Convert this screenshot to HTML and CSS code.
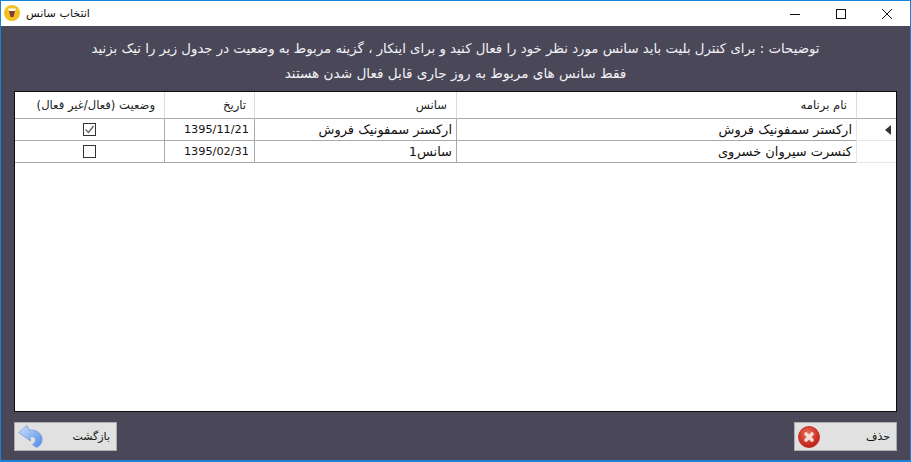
FILE: index.html
```html
<!DOCTYPE html>
<html lang="fa" dir="rtl">
<head>
<meta charset="utf-8">
<title>انتخاب سانس</title>
<link rel="stylesheet" href="styles.css">
</head>
<body>
<div class="window">
  <header class="titlebar">
    <div class="controls">
      <span class="ctl"><svg width="12" height="12" viewBox="0 0 12 12"><path d="M1 11L11 1M1 1l10 10" stroke="#111" stroke-width="1" fill="none"/></svg></span>
      <span class="ctl"><svg width="12" height="12" viewBox="0 0 12 12"><rect x="1.500" y="1.500" width="9" height="9" stroke="#111" fill="none"/></svg></span>
      <span class="ctl"><svg width="12" height="12" viewBox="0 0 12 12"><path d="M1 6.500h10" stroke="#111" fill="none"/></svg></span>
    </div>
    <div class="title-left">
      <span class="title-text">انتخاب سانس</span>
      <svg class="app-icon" width="18" height="18" viewBox="0 0 18 18"><circle cx="9" cy="9" r="8" fill="#f2c11d"/><path d="M5 4.500h8l-1 2.500H6z" fill="#fff"/><path d="M6 7h6l-1.500 6h-3z" fill="#8a3a3a"/></svg>
    </div>
  </header>
  <main class="content">
    <div class="notes">
      <p>توضیحات : برای کنترل بلیت باید سانس مورد نظر خود را فعال کنید و برای اینکار ، گزینه مربوط به وضعیت در جدول زیر را تیک بزنید</p>
      <p class="note-second">فقط سانس های مربوط به روز جاری قابل فعال شدن هستند</p>
    </div>
    <div class="grid">
      <div class="row head">
        <div class="cell rh"></div>
        <div class="cell name">نام برنامه</div>
        <div class="cell session">سانس</div>
        <div class="cell date">تاریخ</div>
        <div class="cell status">وضعیت (فعال/غیر فعال)</div>
      </div>
      <div class="row">
        <div class="cell rh"><span class="arrow"></span></div>
        <div class="cell name">ارکستر سمفونیک فروش</div>
        <div class="cell session">ارکستر سمفونیک فروش</div>
        <div class="cell date">1395/11/21</div>
        <div class="cell status"><span class="check"><svg width="11" height="11" viewBox="0 0 11 11"><path d="M1.500 5.500l3 3 5-6.500" stroke="#666" stroke-width="1.400" fill="none"/></svg></span></div>
      </div>
      <div class="row">
        <div class="cell rh"></div>
        <div class="cell name">کنسرت سیروان خسروی</div>
        <div class="cell session">سانس1</div>
        <div class="cell date">1395/02/31</div>
        <div class="cell status"><span class="check"></span></div>
      </div>
    </div>
    <div class="actions">
      <button class="btn" type="button">
        <span>حذف</span>
        <svg width="22" height="22" viewBox="0 0 22 22"><defs><radialGradient id="r" cx="45%" cy="35%" r="70%"><stop offset="0" stop-color="#f0705a"/><stop offset="1" stop-color="#b5160f"/></radialGradient></defs><circle cx="11" cy="11" r="10.500" fill="url(#r)" stroke="#c8352a"/><path d="M8 8l6 6M14 8l-6 6" stroke="#f6dcd8" stroke-width="3.600" stroke-linecap="round"/></svg>
      </button>
      <button class="btn" type="button">
        <span>بازگشت</span>
        <svg width="25" height="23" viewBox="0 0 25 23"><defs><linearGradient id="b" x1="0" y1="0" x2="1" y2="1"><stop offset="0" stop-color="#cfe3fc"/><stop offset="1" stop-color="#4f88e6"/></linearGradient></defs><path d="M9 .500L.700 7.500 12.500 16 12 11.500c3-.3 5 .5 5.500 2.500.4 2-.8 4-3 5.500l4 3c4-1.500 6-5.500 5.500-9.500C23.500 8 18 4.500 11 5z" fill="url(#b)" stroke="#6f9fe0" stroke-width=".8"/></svg>
      </button>
    </div>
  </main>
</div>
</body>
</html>
```
FILE: styles.css
```css
* { box-sizing: border-box; }
html, body { margin: 0; padding: 0; }
body { width: 911px; height: 462px; overflow: hidden; font-family: "DejaVu Sans", "Noto Sans", sans-serif; }
.window { width: 911px; height: 462px; display: flex; flex-direction: column; border: 1px solid #1883d7; border-bottom-width: 2px; background: #4a4858; }
.titlebar { height: 25px; flex: none; background: #fff; display: flex; justify-content: space-between; align-items: center; }
.controls { display: flex; }
.ctl { width: 46px; height: 25px; display: flex; align-items: center; justify-content: center; }
.title-left { display: flex; align-items: center; gap: 5px; padding-left: 2px; padding-bottom: 1px; direction: ltr; }
.app-icon { order: -1; }
.title-text { font-size: 11.1px; color: #111; direction: rtl; }
.content { flex: 1; display: flex; flex-direction: column; padding: 0 13px 9px; min-height: 0; }
.notes { height: 65px; flex: none; padding-top: 10px; }
.notes p { margin: 0; height: 25px; line-height: 25px; text-align: center; color: #f2f2f6; font-size: 13.3px; white-space: nowrap; }
.notes .note-second { font-size: 13.6px; }
.grid { flex: 1; min-height: 0; background: #fff; border: 1px solid #0c0c0c; }
.row { display: flex; height: 22px; font-size: 13px; color: #111; }
.row.head { height: 27px; font-size: 11.6px; color: #222; }
.cell { flex: none; display: flex; align-items: center; padding: 0 4px; white-space: nowrap; border-left: 1px solid #a9a9a9; border-bottom: 1px solid #a9a9a9; }
.head .cell { border-color: #dcdcdc; border-bottom-color: #a9a9a9; padding-right: 9px; }
.rh { width: 40px; justify-content: flex-start; border-left-color: #e6e6e6; border-bottom-color: #e6e6e6; padding: 0; }
.name { width: 400px; }
.session { width: 202px; }
.date { width: 90px; font-size: 11.3px; padding-right: 5px; }
.head .date { font-size: 11.6px; padding-right: 8px; }
.status { width: 149px; border-left: 0; justify-content: center; }
.head .status { justify-content: flex-start; }
.arrow { width: 0; height: 0; border-top: 5px solid transparent; border-bottom: 5px solid transparent; border-right: 6px solid #333; margin-right: 5px; margin-left: 4px; }
.check { width: 13px; height: 13px; border: 1px solid #333; display: flex; align-items: center; justify-content: center; background: #fff; }
.actions { flex: none; margin-top: 10px; display: flex; justify-content: space-between; }
.btn { width: 103px; height: 29px; background: #e1e1e1; border: 1px solid #adadad; display: flex; align-items: center; justify-content: space-between; padding: 0 6px 0 3px; font-family: inherit; font-size: 11px; color: #111; }
```
